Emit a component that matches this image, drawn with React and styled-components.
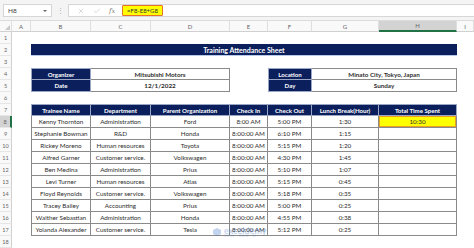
import React from 'react';
import styled, { createGlobalStyle } from 'styled-components';
import { X, Check } from 'lucide-react';

const GlobalStyle = createGlobalStyle`
  html, body {
    margin: 0;
    padding: 0;
    background: #ffffff;
  }
  body {
    font-family: Lato, "Open Sans", "Liberation Sans", sans-serif;
  }
  * {
    box-sizing: border-box;
  }
`;

const COLUMNS = '12px 19px 60px 60px 79px 38px 44px 67px 78px 17px';
const NAVY = '#0b1f5c';
const LINE = '#8a8a8a';

const Sheet = styled.div`
  position: relative;
  width: 474px;
  height: 248px;
  overflow: hidden;
  background: #ffffff;
`;

const FormulaBar = styled.div`
  height: 21px;
  display: flex;
  align-items: center;
  padding: 4px 0 3px 3px;
  gap: 5px;
  background: #f4f4f4;
  border-bottom: 1px solid #dcdcdc;
`;

const NameBox = styled.div`
  width: 49px;
  height: 13px;
  background: #fff;
  border: 1px solid #d6d6d6;
  display: flex;
  align-items: center;
  justify-content: space-between;
  padding: 0 4px 0 4px;
  font-size: 6.5px;
  color: #444;
`;

const Caret = styled.span`
  width: 0;
  height: 0;
  border-left: 2px solid transparent;
  border-right: 2px solid transparent;
  border-top: 2.5px solid #666;
`;

const Dots = styled.span`
  font-size: 7px;
  color: #aaa;
  width: 6px;
  text-align: center;
`;

const FormulaInput = styled.div`
  flex: 1;
  height: 13px;
  background: #fff;
  border: 1px solid #d6d6d6;
  border-right: none;
  display: flex;
  align-items: center;
  padding-left: 8px;
  gap: 8px;
  color: #b5b5b5;
`;

const Fx = styled.span`
  font-style: italic;
  font-family: "DejaVu Serif", serif;
  font-size: 6.5px;
  color: #777;
`;

const FormulaText = styled.span`
  margin-left: -1px;
  height: 11px;
  padding: 0 4px;
  display: flex;
  align-items: center;
  background: #ffff00;
  border: 1px solid #e8702a;
  border-radius: 1px;
  font-size: 6px;
  color: #333;
`;

const Row = styled.div`
  display: grid;
  grid-template-columns: ${COLUMNS};
  height: ${p => p.$h || 12}px;
`;

const ColHead = styled.div`
  display: flex;
  align-items: center;
  justify-content: center;
  font-size: 6px;
  color: #666;
  background: ${p => (p.$active ? '#d3d3d3' : '#f9f9f9')};
  border-right: 1px solid #dedede;
  border-bottom: ${p => (p.$active ? '2px solid #217346' : '1px solid #d0d0d0')};
  position: relative;
`;

const Corner = styled(ColHead)`
  &::after {
    content: '';
    position: absolute;
    right: 1px;
    bottom: 1px;
    border-left: 5px solid transparent;
    border-bottom: 5px solid #c8c8c8;
  }
`;

const RowHead = styled.div`
  display: flex;
  align-items: center;
  justify-content: center;
  font-size: 5.5px;
  color: #666;
  background: ${p => (p.$active ? '#d3d3d3' : '#f9f9f9')};
  border-right: ${p => (p.$active ? '2px solid #217346' : '1px solid #d0d0d0')};
  border-bottom: 1px solid #e6e6e6;
`;

const Title = styled.div`
  grid-column: 3 / 10;
  background: ${NAVY};
  color: #fff;
  font-weight: 700;
  font-size: 7px;
  display: flex;
  align-items: center;
  justify-content: center;
  border-bottom: 1px solid #b9c9e8;
`;

const Cell = styled.div`
  grid-column: ${p => p.$col || 'auto'};
  display: flex;
  align-items: center;
  justify-content: center;
  white-space: nowrap;
  overflow: hidden;
  font-size: 6.3px;
  color: #2e2e2e;
  font-weight: ${p => (p.$bold ? 700 : 400)};
  border-right: 1px solid ${LINE};
  border-bottom: 1px solid ${LINE};
  border-left: ${p => (p.$first ? `1px solid ${LINE}` : 'none')};
  border-top: ${p => (p.$top ? `1px solid ${LINE}` : 'none')};
`;

const HeadCell = styled(Cell)`
  background: ${NAVY};
  color: #fff;
  font-weight: 700;
  font-size: 6.1px;
  border-color: #9aa6c4;
`;

const Highlight = styled(Cell)`
  background: #ffff00;
  box-shadow: inset 0 0 0 1px #e8a020;
`;

const Watermark = styled.div`
  position: absolute;
  left: 212px;
  top: 226px;
  display: flex;
  align-items: center;
  gap: 2px;
  opacity: 0.3;
  pointer-events: none;
`;

const WaterText = styled.div`
  display: flex;
  flex-direction: column;
  line-height: 1;
  color: #3a6fc4;
  font-size: 9px;
  font-weight: 700;
  & span {
    font-size: 3px;
    font-weight: 400;
    letter-spacing: 0.5px;
  }
`;

const trainees = [
  ['Kenny Thornton', 'Administration', 'Ford', '8:00 AM', '5:00 PM', '1:30', '10:30'],
  ['Stephanie Bowman', 'R&D', 'Honda', '8:00:00 AM', '6:10 PM', '1:15'],
  ['Rickey Moreno', 'Human resources', 'Toyota', '8:00:00 AM', '5:15 PM', '1:20'],
  ['Alfred Garner', 'Customer service.', 'Volkswagen', '8:00:00 AM', '4:30 PM', '1:45'],
  ['Ben Medina', 'Administration', 'Prius', '8:00:00 AM', '5:10 PM', '1:07'],
  ['Levi Turner', 'Human resources', 'Atlas', '8:00:00 AM', '5:15 PM', '0:45'],
  ['Floyd Reynolds', 'Customer service.', 'Volkswagen', '8:00:00 AM', '5:18 PM', '0:35'],
  ['Tracey Bailey', 'Accounting', 'Prius', '8:00:00 AM', '5:00 PM', '0:25'],
  ['Walther Sebastian', 'Administration', 'Honda', '8:00:00 AM', '4:55 PM', '0:38'],
  ['Yolanda Alexander', 'Customer service.', 'Tesla', '8:00:00 AM', '5:12 PM', '0:25'],
];

const headers = ['Trainee Name', 'Department', 'Parent Organization', 'Check In', 'Check Out', 'Lunch Break(Hour)', 'Total Time Spent'];
const letters = ['A', 'B', 'C', 'D', 'E', 'F', 'G', 'H', 'I'];

function Blank({ n }) {
  return (
    <Row>
      <RowHead>{n}</RowHead>
    </Row>
  );
}

export default function App() {
  return (
    <Sheet>
      <GlobalStyle />
      <FormulaBar>
        <NameBox>
          H8
          <Caret />
        </NameBox>
        <Dots>⋮</Dots>
        <FormulaInput>
          <X size={8} strokeWidth={1.5} />
          <Check size={8} strokeWidth={1.5} />
          <Fx>fx</Fx>
          <FormulaText>=F8-E8+G8</FormulaText>
        </FormulaInput>
      </FormulaBar>

      <Row $h={11}>
        <Corner />
        {letters.map(l => (
          <ColHead key={l} $active={l === 'H'}>{l}</ColHead>
        ))}
      </Row>

      <Blank n={1} />
      <Row>
        <RowHead>2</RowHead>
        <Title>Training Attendance Sheet</Title>
      </Row>
      <Blank n={3} />
      <Row>
        <RowHead>4</RowHead>
        <HeadCell $col="3" $first $top>Organizer</HeadCell>
        <Cell $col="4 / 6" $top $bold>Mitsubishi Motors</Cell>
        <HeadCell $col="7" $first $top>Location</HeadCell>
        <Cell $col="8 / 10" $top $bold>Minato City, Tokyo, Japan</Cell>
      </Row>
      <Row>
        <RowHead>5</RowHead>
        <HeadCell $col="3" $first>Date</HeadCell>
        <Cell $col="4 / 6" $bold>12/1/2022</Cell>
        <HeadCell $col="7" $first>Day</HeadCell>
        <Cell $col="8 / 10" $bold>Sunday</Cell>
      </Row>
      <Blank n={6} />
      <Row>
        <RowHead>7</RowHead>
        {headers.map((h, i) => (
          <HeadCell key={h} $col={String(i + 3)} $first={i === 0} $top>{h}</HeadCell>
        ))}
      </Row>
      {trainees.map((t, r) => (
        <Row key={t[0]}>
          <RowHead $active={r === 0}>{r + 8}</RowHead>
          {t.slice(0, 6).map((v, i) => (
            <Cell key={i} $col={String(i + 3)} $first={i === 0}>{v}</Cell>
          ))}
          {r === 0 ? <Highlight $col="9">{t[6]}</Highlight> : <Cell $col="9" />}
        </Row>
      ))}
      <Blank n={18} />

      <Watermark>
        <svg width="10" height="10" viewBox="0 0 10 10">
          <path d="M1 3 L5 1 L9 3 L9 7 L5 9 L1 7 Z" fill="#3a6fc4" />
        </svg>
        <WaterText>
          exceldemy
          <span>EXCEL · DATA · BI</span>
        </WaterText>
      </Watermark>
    </Sheet>
  );
}
